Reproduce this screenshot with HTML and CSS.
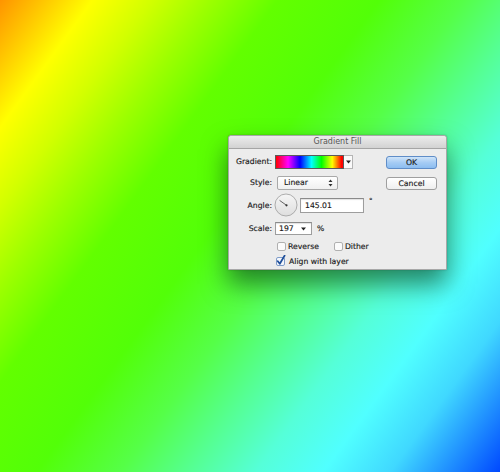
FILE: index.html
```html
<!DOCTYPE html>
<html>
<head>
<meta charset="utf-8">
<link rel="stylesheet" href="styles.css">
</head>
<body>
<div class="desktop">
  <div class="dialog">
    <div class="titlebar">Gradient Fill</div>
    <div class="body">
      <div class="form">
        <div class="row row-gradient">
          <span class="label">Gradient:</span>
          <div class="grad-picker">
            <div class="swatch"></div>
            <div class="arrowbox"><svg width="5" height="4" viewBox="0 0 5 4"><path d="M0 0.5 L5 0.5 L2.5 3.5 Z" fill="#222"/></svg></div>
          </div>
        </div>
        <div class="row row-style">
          <span class="label">Style:</span>
          <div class="select">
            <span>Linear</span>
            <svg width="5" height="8" viewBox="0 0 5 8"><path d="M0.5 3 L2.5 0.5 L4.5 3 Z M0.5 5 L2.5 7.5 L4.5 5 Z" fill="#333"/></svg>
          </div>
        </div>
        <div class="row row-angle">
          <span class="label">Angle:</span>
          <svg class="dial" width="24" height="24" viewBox="0 0 24 24">
            <defs>
              <linearGradient id="dg" x1="0" y1="0" x2="0" y2="1">
                <stop offset="0" stop-color="#f6f6f6"/>
                <stop offset="1" stop-color="#dedede"/>
              </linearGradient>
            </defs>
            <circle cx="12" cy="12" r="11" fill="url(#dg)" stroke="#9c9c9c" stroke-width="0.8"/>
            <line x1="12.5" y1="12.3" x2="5.6" y2="7.4" stroke="#555" stroke-width="0.9"/>
            <circle cx="12.5" cy="12.3" r="1.1" fill="#333"/>
          </svg>
          <div class="field angle-field">145.01</div>
          <span class="degree">°</span>
        </div>
        <div class="row row-scale">
          <span class="label">Scale:</span>
          <div class="field scale-field">
            <span>197</span>
            <svg width="5" height="4" viewBox="0 0 5 4"><path d="M0 0.5 L5 0.5 L2.5 3.5 Z" fill="#222"/></svg>
          </div>
          <span class="unit">%</span>
        </div>
        <div class="row row-checks">
          <span class="label"></span>
          <span class="check cb-reverse"><svg width="9" height="9" viewBox="0 0 9 9"><rect x="0.5" y="0.5" width="8" height="8" rx="1.5" fill="#fbfbfb" stroke="#b0b0b0"/></svg>Reverse</span>
          <span class="check cb-dither"><svg width="9" height="9" viewBox="0 0 9 9"><rect x="0.5" y="0.5" width="8" height="8" rx="1.5" fill="#fbfbfb" stroke="#b0b0b0"/></svg>Dither</span>
        </div>
        <div class="row row-align">
          <span class="label"></span>
          <span class="check cb-align"><svg class="checked" width="10" height="11" viewBox="0 0 10 11"><rect x="0.5" y="2.5" width="8" height="8" rx="1.5" fill="#f4f7fc" stroke="#7f9cc8"/><path d="M1.8 6.3 L3.8 8.8 L8.6 0.6" fill="none" stroke="#1f4f9a" stroke-width="1.8" stroke-linecap="round" stroke-linejoin="round"/></svg>Align with layer</span>
        </div>
      </div>
      <div class="buttons">
        <div class="btn btn-ok">OK</div>
        <div class="btn btn-cancel">Cancel</div>
      </div>
    </div>
  </div>
</div>
</body>
</html>
```
FILE: styles.css
```css
html, body {
  margin: 0;
  padding: 0;
  width: 500px;
  height: 472px;
  overflow: hidden;
}

.desktop {
  position: relative;
  width: 500px;
  height: 472px;
  background: linear-gradient(126deg,
    #ff9400 0%,
    #ffc400 5%,
    #ffff00 11%,
    #d2ff00 18%,
    #9cff00 25%,
    #62ff00 33%,
    #52ff08 45%,
    #55ff48 55%,
    #55ff92 63%,
    #55ffd8 71%,
    #50ffff 79%,
    #40d8ff 87%,
    #0048ff 100%);
  font-family: "DejaVu Sans", "Liberation Sans", sans-serif;
}

.dialog {
  position: absolute;
  left: 228px;
  top: 135px;
  width: 217px;
  height: 133px;
  background: #ececec;
  border: 1px solid #a8a8a8;
  border-radius: 3px 3px 1px 1px;
  box-shadow: 0 14px 26px rgba(0, 50, 20, 0.6), 0 0 2px rgba(0,0,0,0.25);
  display: flex;
  flex-direction: column;
}

.titlebar {
  height: 12px;
  border-bottom: 1px solid #a5a5a5;
  background: linear-gradient(#ececec, #d2d2d2);
  border-radius: 3px 3px 0 0;
  color: #555;
  font-size: 8px;
  line-height: 12px;
  text-align: center;
}

.body {
  flex: 1;
  display: flex;
  justify-content: space-between;
  padding: 5px 9px 0 7px;
}

.form {
  display: flex;
  flex-direction: column;
  font-size: 7.7px;
  color: #1a1a1a;
  -webkit-text-stroke: 0.15px #1a1a1a;
}

.row {
  display: flex;
  align-items: center;
  height: 15px;
}

.row-style { margin-top: 6px; }
.row-angle { margin-top: 3px; height: 24px; }
.row-scale { margin-top: 4px; }
.row-checks { margin-top: 3px; height: 14px; }
.row-align { margin-top: 1px; height: 14px; }

.label {
  width: 36px;
  text-align: right;
  flex: none;
}

.grad-picker {
  display: flex;
  margin-left: 3px;
  height: 14px;
}

.swatch {
  width: 67px;
  height: 12px;
  border: 1px solid #5a5a5a;
  background: linear-gradient(90deg,
    #ff0000 0%,
    #ff00ff 18%,
    #0000ff 36%,
    #00ffff 53%,
    #00ff00 68%,
    #ffff00 84%,
    #ff0000 98%);
}

.arrowbox {
  width: 8px;
  height: 12px;
  border: 1px solid #b5b5b5;
  border-left: none;
  background: #fafafa;
  display: flex;
  align-items: center;
  justify-content: center;
}

.select {
  margin-left: 5px;
  height: 12px;
  border: 1px solid #a9a9a9;
  border-radius: 2px;
  background: linear-gradient(#ffffff, #f0f0f0);
  display: flex;
  align-items: center;
  justify-content: space-between;
  padding: 0 4px 0 6px;
  width: 49px;
}

.dial {
  margin-left: 2px;
  flex: none;
}

.field {
  background: #fff;
  border: 1px solid #9d9d9d;
  border-top-color: #8a8a8a;
  box-shadow: inset 0 1px 1px rgba(0,0,0,0.12);
  display: flex;
  align-items: center;
  box-sizing: border-box;
}

.angle-field {
  margin-left: 2px;
  width: 64px;
  height: 15px;
  padding-left: 4px;
}

.degree {
  margin-left: 5px;
  align-self: flex-start;
  margin-top: 4px;
  font-size: 7px;
}

.scale-field {
  margin-left: 3px;
  width: 37px;
  height: 13px;
  padding: 0 5px 0 3px;
  justify-content: space-between;
}

.unit {
  margin-left: 5px;
}

.check {
  display: flex;
  align-items: center;
}

.check svg {
  margin-right: 2px;
  flex: none;
}

.cb-reverse { margin-left: 5px; }
.cb-dither { margin-left: 15px; }
.cb-align { margin-left: 4px; }
.cb-align svg { margin-right: 3px; margin-top: -2px; }

.buttons {
  display: flex;
  flex-direction: column;
  gap: 8px;
  margin-top: 2px;
}

.btn {
  width: 49px;
  height: 11px;
  border: 1px solid #9f9f9f;
  border-radius: 3px;
  background: linear-gradient(#ffffff, #efefef);
  font-size: 7.7px;
  line-height: 11px;
  text-align: center;
  color: #1a1a1a;
  -webkit-text-stroke: 0.15px #1a1a1a;
}

.btn-ok {
  border-color: #5f8dc8;
  background: linear-gradient(#cfe4f9, #a6ccf4 50%, #8cbdf0);
}
```
